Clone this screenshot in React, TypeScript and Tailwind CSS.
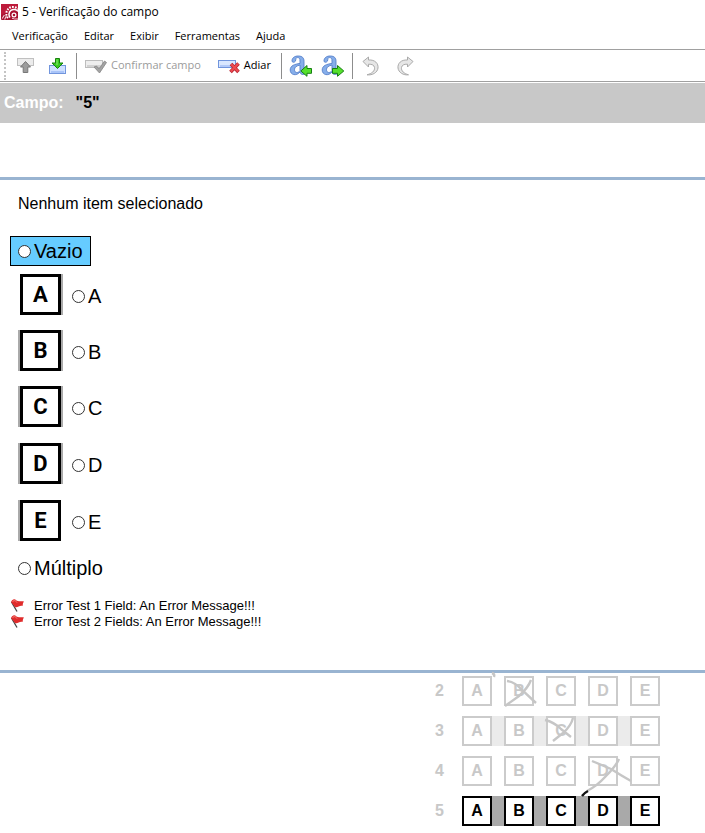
import type { ReactNode } from "react";

const ui = "font-['Open_Sans','Noto_Sans',sans-serif]";
const arial = "font-['Liberation_Sans',Arial,sans-serif]";
const print = "font-['Roboto','Liberation_Sans',sans-serif]";

function AppLogo() {
  return (
    <svg width="17" height="16" viewBox="0 0 17 16" aria-hidden="true">
      <rect width="17" height="16" rx="1" fill="#a8102f" />
      <path d="M0 0H17V4L0 11Z" fill="#bd1a3b" />
      <path d="M7 14A5.6 5.6 0 0 1 17 5.2" fill="none" stroke="#fff" strokeWidth="2" strokeDasharray="1.6 1.2" />
      <path d="M9 13.5A4.2 4.2 0 0 1 17 7.4" fill="none" stroke="#fff" strokeWidth="1.5" />
      <circle cx="13" cy="11" r="1.9" fill="none" stroke="#fff" strokeWidth="1.2" />
      <path d="M1.2 14.5L3.4 11M3.6 15.5L5.4 12" stroke="#f3ccd4" strokeWidth="1.1" />
      <path d="M11 14.2Q13 15.4 17 15" fill="none" stroke="#f3ccd4" strokeWidth="1" />
    </svg>
  );
}

function UpIcon() {
  return (
    <svg width="18" height="18" viewBox="0 0 18 18" aria-hidden="true">
      <rect x="0.5" y="1.5" width="16" height="7" fill="#ececec" stroke="#c0c0c0" />
      <path d="M8.5 4.5L13.5 10H10.8V15.5H6.2V10H3.5Z" fill="#9c9c9c" stroke="#777" />
    </svg>
  );
}

function DownIcon() {
  return (
    <svg width="18" height="18" viewBox="0 0 18 18" aria-hidden="true">
      <rect x="0.5" y="8.5" width="16" height="8" fill="#cfe0ff" stroke="#7195dd" />
      <path d="M2 15H15" stroke="#a9c4f8" strokeWidth="2" />
      <path d="M6.5 1.5H10.5V6H14L8.5 11.5L3 6H6.5Z" fill="#38ca20" stroke="#18800e" />
      <path d="M8 2.5V8" stroke="#8cf071" />
    </svg>
  );
}

function ConfirmIcon() {
  return (
    <svg width="22" height="18" viewBox="0 0 22 18" aria-hidden="true">
      <rect x="0.5" y="3.5" width="17" height="7" fill="#eee" stroke="#bdbdbd" />
      <path d="M2 9H16" stroke="#d2d2d2" strokeWidth="2" />
      <path d="M9 10L11.5 9L14 12L19.5 4L21.5 5.5L14.5 16Z" fill="#a3a3a3" stroke="#858585" strokeWidth="0.8" />
    </svg>
  );
}

function PostponeIcon() {
  return (
    <svg width="22" height="18" viewBox="0 0 22 18" aria-hidden="true">
      <rect x="0.5" y="3.5" width="17" height="7" fill="#d9e7ff" stroke="#7195dd" />
      <path d="M2 9H16" stroke="#b2caf9" strokeWidth="2" />
      <path d="M13 7L20.5 15M20.5 6.5L12.5 15" stroke="#b72430" strokeWidth="3.6" />
      <path d="M13.2 7.2L20.2 14.6M20.2 6.8L12.8 14.6" stroke="#ec4a50" strokeWidth="2.2" />
    </svg>
  );
}

function LetterIcon({ next = false }: { next?: boolean }) {
  return (
    <svg width="24" height="24" viewBox="0 0 24 24" aria-hidden="true">
      <path d="M3 7C3 3.5 6 2 9.2 2C13.4 2 15 4 15 7.3V16C15 17.6 15.7 18.2 17 18V19.6C13.8 21.2 11.4 20.5 11 18C7.4 22.5 1.2 21 1.2 16C1.2 11.5 5.5 10.3 11 9.4V7C11 4.6 10.4 3.6 8.5 3.6C7.2 3.6 6.7 4.4 6.8 5.5C7 8.7 3 9 3 7ZM11 11C7.4 12 5.5 13 5.5 15.7C5.5 19 9 19.4 11 16.8Z" fill="#86aeea" stroke="#557fc9" strokeWidth="0.9" fillRule="evenodd" />
      {next ? (
        <path d="M11.5 14.5H16.5V11.5L22.8 17L16.5 22.3V19.3H11.5Z" fill="#55e02c" stroke="#167f12" strokeWidth="1" />
      ) : (
        <path d="M22.5 14.5H18V11.5L11.8 17L18 22.3V19.3H22.5Z" fill="#55e02c" stroke="#167f12" strokeWidth="1" />
      )}
    </svg>
  );
}

function UndoIcon() {
  return (
    <svg width="18" height="20" viewBox="0 0 18 20" aria-hidden="true">
      <path d="M1 5.5L6.5 1V4C13 3.5 16.5 7.5 16 12C15.5 16.5 10.5 19.5 5 18.8C10 17.5 13 15 12.5 11.5C12.2 9.3 10 8 6.5 8.2V11Z" fill="#e6e6e6" stroke="#aaa" />
    </svg>
  );
}

function RedoIcon() {
  return (
    <svg width="18" height="20" viewBox="0 0 18 20" aria-hidden="true">
      <path d="M17 5.5L11.5 1V4C5 3.5 1.5 7.5 2 12C2.5 16.5 7.5 19.5 12.5 18.8C8 17.5 5 15 5.5 11.5C5.8 9.3 8 8 11.5 8.2V11Z" fill="#e6e6e6" stroke="#aaa" />
    </svg>
  );
}

function Flag() {
  return (
    <svg width="14" height="15" viewBox="0 0 14 15" aria-hidden="true">
      <path d="M1.5 3L7 12.5" stroke="#444" strokeWidth="1.3" />
      <path d="M1 3C2.5 0 4.5 -0.5 6.5 1.5C8.5 3 11 1.5 14 2.5C12.5 4 13 5.5 12.5 7C9.5 6.2 7.5 9 5 8Z" fill="#e02c2c" />
      <path d="M2.5 2.8C4 1 5.5 1.4 7 3.5" fill="none" stroke="#f78a80" />
    </svg>
  );
}

function ToolButton({ label, children, disabled = false }: { label: string; children: ReactNode; disabled?: boolean }) {
  return (
    <button type="button" aria-label={label} disabled={disabled} className="flex h-7 w-8 items-center justify-center">
      {children}
    </button>
  );
}

function Divider() {
  return <div className="h-[26px] w-px bg-[#8d8d8d]" />;
}

function Choice({ label, id }: { label: string; id: string }) {
  return (
    <div className="flex items-center gap-[3px]">
      <input
        type="radio"
        name="answer"
        id={id}
        className="size-[13px] appearance-none rounded-full border border-[#333] bg-white checked:border-4"
      />
      <label htmlFor={id} className="text-[20px] leading-7">{label}</label>
    </div>
  );
}

const options = [
  { letter: "A", edge: "border-l-transparent border-r-[#aaa]" },
  { letter: "B", edge: "border-l-[#aaa] border-r-[#aaa]" },
  { letter: "C", edge: "border-l-[#aaa] border-r-[#aaa]" },
  { letter: "D", edge: "border-l-[#aaa] border-r-[#aaa]" },
  { letter: "E", edge: "border-l-[#aaa] border-r-transparent" },
];

const sheetRows = [
  { number: "2", band: "bg-white", tone: "border-[#cbcbcb] text-[#c8c8c8]" },
  { number: "3", band: "bg-[#ebebeb]", tone: "border-[#cbcbcb] text-[#c8c8c8]" },
  { number: "4", band: "bg-white", tone: "border-[#cbcbcb] text-[#c8c8c8]" },
  { number: "5", band: "bg-[#a9a9a9]", tone: "border-black text-black" },
];

const errors = ["Error Test 1 Field: An Error Message!!!", "Error Test 2 Fields: An Error Message!!!"];

export default function App() {
  return (
    <div className={`flex min-h-screen flex-col bg-white text-black ${arial}`}>
      <header className={`flex h-6 items-center gap-1 px-px text-xs ${ui}`}>
        <AppLogo />
        <h1>5 - Verificação do campo</h1>
      </header>

      <nav className={`flex h-[25px] items-center gap-4 px-3 text-[11px] ${ui}`}>
        {["Verificação", "Editar", "Exibir", "Ferramentas", "Ajuda"].map((item) => (
          <button type="button" key={item}>{item}</button>
        ))}
      </nav>

      <div className={`mb-px flex h-[33px] items-center border-t border-b border-[#a0a0a0] pl-1 text-[11px] ${ui}`}>
        <div className="h-7 border-l-2 border-dotted border-[#c4c4c4]" />
        <div className="flex pr-[2px] pl-1">
          <ToolButton label="Anterior" disabled><UpIcon /></ToolButton>
          <ToolButton label="Próximo"><DownIcon /></ToolButton>
        </div>
        <Divider />
        <button type="button" disabled className="ml-2 flex items-center gap-1 text-[#9b9b9b]">
          <ConfirmIcon />
          Confirmar campo
        </button>
        <button type="button" className="mr-[10px] ml-[17px] flex items-center gap-1">
          <PostponeIcon />
          Adiar
        </button>
        <Divider />
        <div className="flex px-[3px]">
          <ToolButton label="Caractere anterior"><LetterIcon /></ToolButton>
          <ToolButton label="Próximo caractere"><LetterIcon next /></ToolButton>
        </div>
        <Divider />
        <div className="flex gap-[2px] pl-[2px]">
          <ToolButton label="Desfazer" disabled><UndoIcon /></ToolButton>
          <ToolButton label="Refazer" disabled><RedoIcon /></ToolButton>
        </div>
      </div>

      <div className="flex h-10 items-center gap-3 bg-[#c8c8c8] px-1 text-base font-bold">
        <span className="text-white">Campo:</span>
        <span>"5"</span>
      </div>

      <div className="h-[54px]" />

      <main className="border-y-[3px] border-[#99b4d1] px-[10px] pt-3 pb-10">
        <p className="pl-2 text-base leading-6">Nenhum item selecionado</p>

        <fieldset aria-label="Resposta" className="mt-5">
          <div className="flex">
            <div className="flex h-[30px] items-center border border-black bg-[#66ccff] px-[7px]">
              <Choice id="vazio" label="Vazio" />
            </div>
          </div>
          <div className="mt-2 grid grid-rows-[56px_56px_57px_57px_41px] items-start pl-2">
            {options.map(({ letter, edge }) => (
              <div key={letter} className="flex items-center gap-[9px]">
                <div className={`border-x-2 ${edge}`}>
                  <div className={`flex size-[41px] items-center justify-center border-[3px] border-black text-[22px] font-bold ${print}`}>
                    {letter}
                  </div>
                </div>
                <div className="pt-[3px]">
                  <Choice id={`option-${letter}`} label={letter} />
                </div>
              </div>
            ))}
          </div>
          <div className="mt-3 flex h-[30px] items-center px-2">
            <Choice id="multiplo" label="Múltiplo" />
          </div>
        </fieldset>

        <ul className="mt-[15px] text-[13px] leading-4">
          {errors.map((error) => (
            <li key={error} className="flex items-center gap-[10px]">
              <Flag />
              {error}
            </li>
          ))}
        </ul>
      </main>

      <section aria-label="Folha de respostas" className="flex pt-[3px] pl-[435px]">
        <div className="relative flex flex-col gap-[10px]">
          {sheetRows.map(({ number, band, tone }) => (
            <div key={number} className="flex items-center text-base font-bold">
              <span className="w-[27px] text-[#c8c8c8]">{number}</span>
              <div className={`flex gap-3 ${band}`}>
                {options.map(({ letter }) => (
                  <span key={letter} className={`flex size-[30px] items-center justify-center border-2 bg-white ${tone}`}>
                    {letter}
                  </span>
                ))}
              </div>
            </div>
          ))}
          <svg className="absolute inset-0 overflow-visible" width="226" height="150" viewBox="0 0 226 150" fill="none" aria-hidden="true">
            <g stroke="#c6c6c6" strokeWidth="2.4">
              <path d="M57 -3Q60 -2 59 1" />
              <path d="M72 5Q80 6 87 14L101 27M96 4Q93 12 84 20L70 30" />
              <path d="M110 44Q119 46 126 53L136 61M138 42Q136 50 128 57L118 65" />
              <path d="M157 85L176 93Q187 100 196 105M184 83Q181 90 171 100Q162 110 152 115" />
            </g>
            <path d="M147 120Q149 117 153 115" stroke="#111" strokeWidth="2.4" />
          </svg>
        </div>
      </section>
    </div>
  );
}
